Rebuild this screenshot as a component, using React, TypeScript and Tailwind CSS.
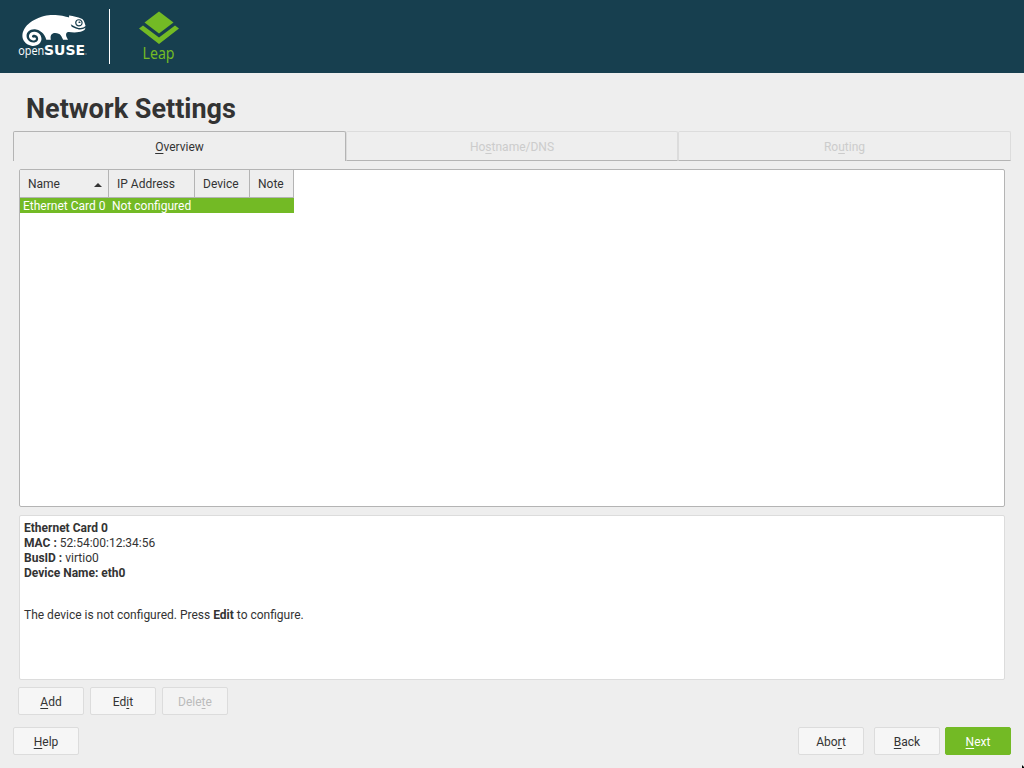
import React from "react";
import { FaSuse } from "react-icons/fa";

/** A label whose keyboard shortcut letter is underlined. */
function Label({ text, at }: { text: string; at: number }) {
  return (
    <span>
      {text.slice(0, at)}
      <span className="underline decoration-1 underline-offset-[2px] [text-decoration-skip-ink:none]">{text[at]}</span>
      {text.slice(at + 1)}
    </span>
  );
}

function Button({ text, at, className = "" }: { text: string; at: number; className?: string }) {
  return (
    <button
      className={`flex h-7 w-[66px] items-center justify-center rounded-[2px] border pt-[3px] ${
        className || "border-[#dcdcdc] bg-[#f6f6f6]"
      }`}
    >
      <Label text={text} at={at} />
    </button>
  );
}

function Header() {
  return (
    <header className="flex h-[73px] shrink-0 bg-[#173f4f]">
      <div className="ml-[18px] mt-[15px] h-[50px] w-[70px]">
        <FaSuse className="ml-[4px] h-[31px] w-[64px] text-white" viewBox="0 96 640 320" preserveAspectRatio="none" />
        <svg className="-mt-[6px] block h-[22px] w-[70px] overflow-visible" viewBox="0 0 70 22" fill="#fff">
          <text x="0.3" y="14.500" fontFamily="Open Sans" fontSize="12" textLength="26" lengthAdjust="spacingAndGlyphs">open</text>
          <text x="26" y="14.500" fontFamily="DejaVu Sans" fontWeight="700" fontSize="13.700" textLength="41" lengthAdjust="spacingAndGlyphs">SUSE</text>
          <rect x="67.500" y="13.500" width="1" height="1" opacity="0.7" />
        </svg>
      </div>
      <div className="ml-[21px] mt-[9px] h-[55px] w-px bg-white" />
      <svg className="ml-[28px] mt-[9px] h-[56px] w-[44px]" viewBox="0 0 44 56" fill="#73ba25">
        <path d="M21 2.5 35.5 13.5 21 24.500 6.500 13.500Z" />
        <path d="M1 19.500 5 16.500 21 28.500 37 16.500 41 19.500 21 35Z" />
        <text x="4.500" y="50" fontFamily="Noto Sans" fontSize="15.500" textLength="32" lengthAdjust="spacingAndGlyphs">Leap</text>
      </svg>
    </header>
  );
}

export default function App() {
  return (
    <div className="flex h-[768px] w-[1024px] flex-col overflow-hidden bg-[#eeeeee] font-['Roboto',sans-serif] text-[12px] leading-[15px] text-[#333333]">
      <Header />
      <main className="relative flex flex-1 flex-col px-[13px]">
        <h1 className="mt-[18px] pl-[13px] text-[27px] leading-[37px] font-bold">Network Settings</h1>
        <div className="mt-[3px] flex h-[30px] w-[998px]">
          <div className="flex w-[333px] justify-center rounded-t-[2px] border border-b-0 border-[#b4b4b4] pt-2">
            <Label text="Overview" at={0} />
          </div>
          <div className="flex w-[332px] justify-center rounded-t-[2px] border border-[#dcdcdc] border-b-[#b4b4b4] pt-2 text-[#cccccc]">
            <Label text="Hostname/DNS" at={2} />
          </div>
          <div className="flex w-[333px] justify-center rounded-t-[2px] border border-[#dcdcdc] border-b-[#b4b4b4] pt-2 text-[#cccccc]">
            <Label text="Routing" at={2} />
          </div>
        </div>

        <section className="mt-2 ml-[6px] h-[338px] w-[986px] rounded-[2px] border border-[#b4b4b4] bg-white">
          <div className="w-[274px]">
            <div className="grid h-7 grid-cols-[89px_86px_55px_44px] border-b border-[#b4b4b4] bg-[#eeeeee] leading-[29px]">
              <div className="flex h-[27px] items-start justify-between border-r border-[#b4b4b4] pr-[6px] pl-2">
                Name
                <svg className="mt-[13px] h-[4px] w-[8px]" viewBox="0 0 8 4">
                  <path d="M0 4 4 0l4 4Z" fill="#333" />
                </svg>
              </div>
              <div className="h-[27px] border-r border-[#b4b4b4] pl-2">IP Address</div>
              <div className="h-[27px] border-r border-[#b4b4b4] pl-2">Device</div>
              <div className="h-[27px] border-r border-[#b4b4b4] pl-2">Note</div>
            </div>
            <div className="grid h-[15px] grid-cols-[89px_1fr] bg-[#73ba25] leading-[16px] text-white">
              <div className="pl-[3px] whitespace-nowrap">Ethernet Card 0</div>
              <div className="pl-[3px]">Not configured</div>
            </div>
          </div>
        </section>

        <section className="mt-2 ml-[6px] h-[165px] w-[986px] rounded-[2px] border border-[#dcdcdc] bg-white pt-[5px] pl-[4px]">
          <p className="font-bold">Ethernet Card 0</p>
          <p><b>MAC : </b>52:54:00:12:34:56</p>
          <p><b>BusID : </b>virtio0</p>
          <p className="font-bold">Device Name: eth0</p>
          <p className="mt-[27px]">The device is not configured. Press <b>Edit</b> to configure.</p>
        </section>

        <div className="mt-[7px] ml-[5px] flex gap-[6px]">
          <Button text="Add" at={0} />
          <Button text="Edit" at={2} />
          <Button text="Delete" at={4} className="border-[#dcdcdc] bg-[#f3f3f3] text-[#bbbbbb]" />
        </div>
        <footer className="mt-3 flex w-[998px]">
          <Button text="Help" at={0} />
          <div className="ml-auto flex">
            <Button text="Abort" at={3} />
            <div className="ml-[10px]"><Button text="Back" at={0} /></div>
            <div className="ml-[5px]"><Button text="Next" at={0} className="border-[#73ba25] bg-[#73ba25] text-white" /></div>
          </div>
        </footer>
        <svg className="absolute right-0 bottom-0 h-[3px] w-[2px]" viewBox="0 0 2 3">
          <path d="M0 0 2 2V3H0Z" fill="#000" />
        </svg>
      </main>
    </div>
  );
}
